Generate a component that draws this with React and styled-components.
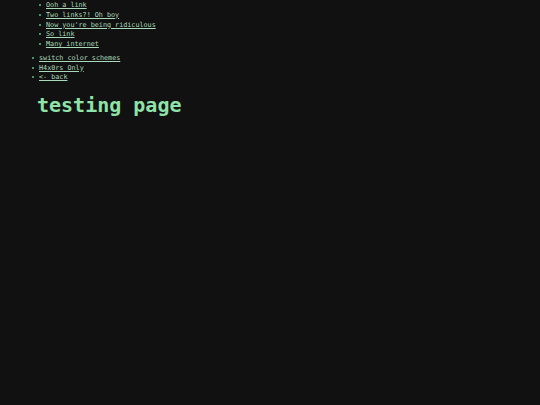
import React from "react";
import styled, { createGlobalStyle } from "styled-components";

const GlobalStyle = createGlobalStyle`
  html, body {
    margin: 0;
    padding: 0;
    background: #111111;
  }
  body {
    font-family: "DejaVu Sans Mono", "Liberation Mono", monospace;
    color: #a9d9b9;
  }
`;

const Page = styled.div`
  min-height: 405px;
  padding-top: 1px;
  background: #111111;
`;

const List = styled.ul`
  margin: 0 0 ${(props) => props.gap || 0}px 0;
  padding: 0 0 0 ${(props) => props.indent}px;
  list-style: none;
  font-size: 6.75px;
  line-height: 9.75px;
`;

const Item = styled.li`
  &::before {
    content: "";
    display: inline-block;
    width: 2px;
    height: 2px;
    border-radius: 1px;
    background: #55c584;
    margin-left: -7px;
    margin-right: 5px;
    vertical-align: 1px;
  }
`;

const Link = styled.a`
  color: #a9d9b9;
  text-decoration: underline;
  text-decoration-thickness: 0.6px;
  text-underline-offset: 1px;
`;

const Title = styled.h1`
  margin: 10px 0 0 37px;
  font-size: 20px;
  line-height: 24px;
  font-weight: bold;
  color: #8fe2a9;
`;

const subLinks = [
  "Ooh a link",
  "Two links?! Oh boy",
  "Now you're being ridiculous",
  "So link",
  "Many internet",
];

const mainLinks = ["switch color schemes", "H4x0rs Only", "<- back"];

export default function App() {
  return (
    <Page>
      <GlobalStyle />
      <List indent={46} gap={4}>
        {subLinks.map((text) => (
          <Item key={text}>
            <Link href="#">{text}</Link>
          </Item>
        ))}
      </List>
      <List indent={39}>
        {mainLinks.map((text) => (
          <Item key={text}>
            <Link href="#">{text}</Link>
          </Item>
        ))}
      </List>
      <Title>testing page</Title>
    </Page>
  );
}
